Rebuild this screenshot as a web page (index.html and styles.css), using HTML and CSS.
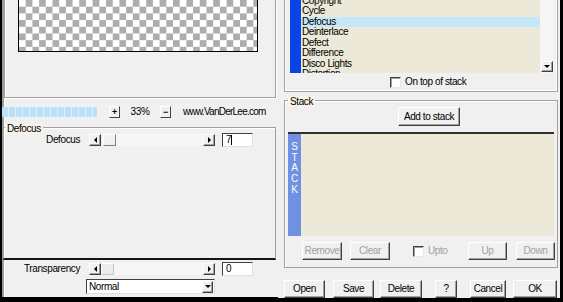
FILE: index.html
```html
<!DOCTYPE html>
<html lang="en">
<head>
  <meta charset="UTF-8" />
  <title>Filter Settings</title>
  <link rel="stylesheet" href="styles.css">
</head>
<body>
<div class="window">

  <!-- Left: preview and parameters -->
  <div class="left-panel">
    <div class="preview-box">
      <div class="preview"></div>
    </div>

    <div class="zoom-row">
      <div class="progress"></div>
      <div class="tiny-btn">+</div>
      <span class="zoom-value">33%</span>
      <div class="tiny-btn">&minus;</div>
      <span class="site">www.VanDerLee.com</span>
    </div>

    <div class="group settings-group">
      <div class="group-title">Defocus</div>
      <div class="param-row">
        <span class="param-label">Defocus</span>
        <div class="slider">
          <div class="arrow-btn"><span class="tri-left"></span></div>
          <div class="thumb"></div>
          <div class="track"></div>
          <div class="arrow-btn"><span class="tri-right"></span></div>
        </div>
        <div class="num-input">7<span class="caret"></span></div>
      </div>
    </div>

    <div class="param-row transparency-row">
      <span class="param-label">Transparency</span>
      <div class="slider">
        <div class="arrow-btn"><span class="tri-left"></span></div>
        <div class="thumb thumb-flat"></div>
        <div class="track"></div>
        <div class="arrow-btn"><span class="tri-right"></span></div>
      </div>
      <div class="num-input">0</div>
    </div>

    <div class="select">
      <span class="select-text">Normal</span>
      <div class="arrow-btn drop-btn"><span class="tri-down"></span></div>
    </div>
  </div>

  <!-- Right: filter list and stack -->
  <div class="right-panel">
    <div class="filter-box">
      <div class="filter-list">
        <div class="list-strip"></div>
        <div class="list-items">
          <div class="list-scroll">
            <div class="item">Copyright</div>
            <div class="item">Cycle</div>
            <div class="item selected">Defocus</div>
            <div class="item">Deinterlace</div>
            <div class="item">Defect</div>
            <div class="item">Difference</div>
            <div class="item">Disco Lights</div>
            <div class="item">Distortion</div>
          </div>
        </div>
        <div class="vscroll">
          <div class="arrow-btn down-btn"><span class="tri-down"></span></div>
        </div>
      </div>
      <div class="check-row on-top">
        <div class="checkbox"></div>
        <span>On top of stack</span>
      </div>
    </div>

    <div class="group stack-group">
      <div class="group-title">Stack</div>
      <div class="btn add-btn">Add to stack</div>
      <div class="stack-list">
        <div class="stack-strip">S<br>T<br>A<br>C<br>K</div>
        <div class="stack-items"></div>
      </div>
      <div class="stack-buttons">
        <div class="btn disabled btn-remove">Remove</div>
        <div class="btn disabled btn-clear">Clear</div>
        <div class="check-row upto">
          <div class="checkbox"></div>
          <span class="disabled-text">Upto</span>
        </div>
        <div class="btn disabled btn-up">Up</div>
        <div class="btn disabled btn-down">Down</div>
      </div>
    </div>

    <div class="dialog-buttons">
      <div class="btn btn-open">Open</div>
      <div class="btn btn-save">Save</div>
      <div class="btn btn-delete">Delete</div>
      <div class="btn btn-help">?</div>
      <div class="btn btn-cancel">Cancel</div>
      <div class="btn btn-ok">OK</div>
    </div>
  </div>

</div>
</body>
</html>
```

FILE: styles.css
```css
* {
  box-sizing: border-box;
  margin: 0;
  padding: 0;
}

body {
  background-color: #000;
  color: #000;
  font-family: 'Liberation Sans', Arial, sans-serif;
  font-size: 10px;
  letter-spacing: -0.4px;
  line-height: 1;
}

.window {
  width: 563px;
  height: 302px;
  display: flex;
  align-items: flex-start;
  padding: 0 3px 0 2px;
  background-color: #000;
  overflow: hidden;
}

/* Left panel */
.left-panel {
  width: 276px;
  height: 297px;
  background-color: #f0f0f0;
  box-shadow: inset 2px 0 #9a9a9a, inset 3px 0 #fff;
  display: flex;
  flex-direction: column;
}

.preview-box {
  margin-left: 2px;
  width: 272px;
  height: 98px;
  border: 1px solid #a0a0a0;
  border-top: none;
  box-shadow: inset 1px 0 #fff, 1px 1px #fff;
}

.preview {
  margin-left: 13px;
  width: 240px;
  height: 52px;
  border: 1px solid #000;
  border-top: none;
  background: conic-gradient(#adadad 25%, #fff 0 50%, #adadad 0 75%, #fff 0) 0 0 / 13.4px 13.4px;
}

.zoom-row {
  height: 26px;
  display: flex;
  align-items: center;
}

.progress {
  width: 95px;
  height: 10px;
  margin-top: 2px;
  background: repeating-linear-gradient(90deg, #b9e1f8 0 6px, #dcf1fc 6px 7px);
}

.tiny-btn {
  width: 11px;
  height: 12px;
  margin-left: 12px;
  margin-top: 2px;
  background-color: #f0f0f0;
  border: 1px solid;
  border-color: #fff #404040 #404040 #fff;
  display: flex;
  align-items: center;
  justify-content: center;
  font-size: 9px;
  font-weight: bold;
}

.zoom-value {
  width: 40px;
  margin-top: 2px;
  text-align: center;
}

.zoom-value + .tiny-btn {
  margin-left: 0;
}

.site {
  margin-left: 12px;
  margin-top: 2px;
  letter-spacing: -0.75px;
}

/* Group boxes */
.group {
  border: 1px solid #a0a0a0;
  box-shadow: inset 1px 1px #fff;
}

.group-title {
  width: fit-content;
  background-color: #f8f5e6;
  padding: 0 2px;
  height: 10px;
  line-height: 10px;
}

.settings-group {
  margin: 3px 0 0 1px;
  width: 273px;
  height: 133px;
  border-bottom: 2px solid #151515;
}

.settings-group .group-title {
  margin: -4px 0 0 1px;
}

.param-row {
  height: 14px;
  display: flex;
  align-items: center;
}

.settings-group .param-row {
  margin-top: -1px;
}

.param-label {
  width: 76px;
  text-align: right;
}

.transparency-row {
  margin-top: 2px;
}

.transparency-row .param-label {
  width: 78px;
}

.slider {
  margin-left: 9px;
  width: 126px;
  height: 12px;
  display: flex;
}

.arrow-btn {
  width: 12px;
  height: 12px;
  background-color: #f0f0f0;
  border: 1px solid;
  border-color: #fff #404040 #404040 #fff;
  box-shadow: inset -1px -1px #a0a0a0;
  display: flex;
  align-items: center;
  justify-content: center;
}

.thumb {
  width: 13px;
  margin-left: 2px;
  background-color: #f0f0f0;
  border: 1px solid;
  border-color: #fff #808080 #808080 #fff;
}

.thumb-flat {
  margin-left: 0;
  border-color: #fff #c8c8c8 #c8c8c8 #fff;
  background-color: #ececec;
}

.track {
  flex: 1;
  background-color: #f6f6f6;
}

.tri-left,
.tri-right,
.tri-down {
  width: 0;
  height: 0;
  border: 3px solid transparent;
}

.tri-left {
  border-left: none;
  border-right-color: #000;
}

.tri-right {
  border-right: none;
  border-left-color: #000;
}

.tri-down {
  border-bottom: none;
  border-top-color: #000;
}

.num-input {
  margin-left: 7px;
  width: 31px;
  height: 14px;
  background-color: #fff;
  border: 1px solid;
  border-color: #404040 #e0e0e0 #e0e0e0 #404040;
  padding-left: 3px;
  display: flex;
  align-items: center;
}

.caret {
  width: 1px;
  height: 10px;
  background-color: #000;
}

.select {
  margin: 3px 0 0 84px;
  width: 129px;
  height: 15px;
  background-color: #fff;
  border: 1px solid;
  border-color: #404040 #e0e0e0 #e0e0e0 #404040;
  display: flex;
  align-items: center;
}

.select-text {
  flex: 1;
  padding-left: 2px;
}

.drop-btn {
  width: 11px;
  height: 12px;
  margin-right: 1px;
}

/* Right panel */
.right-panel {
  width: 282px;
  height: 298px;
  background-color: #f0f0f0;
  display: flex;
  flex-direction: column;
}

.filter-box {
  margin-left: 6px;
  width: 274px;
  height: 92px;
  border: 1px solid #a0a0a0;
  border-top: none;
  box-shadow: inset 1px 0 #fff, inset -1px -1px #fff;
}

.filter-list {
  margin-left: 5px;
  width: 264px;
  height: 73px;
  display: flex;
}

.list-strip {
  width: 11px;
  background-color: #0a44e4;
}

.list-items {
  flex: 1;
  background-color: #ece9d8;
  overflow: hidden;
}

.list-scroll {
  margin-top: -4.5px;
}

.item {
  height: 10.5px;
  line-height: 10.5px;
  padding-left: 1px;
  white-space: nowrap;
}

.item.selected {
  background-color: #c6e7f9;
}

.vscroll {
  width: 14px;
  background-color: #f6f6f6;
  display: flex;
  flex-direction: column;
  justify-content: flex-end;
  padding: 0 1px 1px 1px;
}

.down-btn {
  width: 12px;
  height: 11px;
}

.check-row {
  display: flex;
  align-items: center;
}

.on-top {
  height: 18px;
  padding-left: 105px;
}

.checkbox {
  width: 11px;
  height: 11px;
  margin-right: 4px;
  background-color: #fff;
  border: 1px solid;
  border-color: #404040 #e8e8e8 #e8e8e8 #404040;
  box-shadow: inset 1px 1px #a0a0a0;
}

.stack-group {
  margin: 8px 0 0 6px;
  width: 274px;
  height: 168px;
}

.stack-group .group-title {
  margin: -5px 0 0 3px;
  height: 11px;
  line-height: 11px;
}

.btn {
  height: 18px;
  background-color: #f0f0f0;
  border: 1px solid;
  border-color: #fff #404040 #404040 #fff;
  box-shadow: inset -1px -1px #a0a0a0;
  display: flex;
  align-items: center;
  justify-content: center;
  white-space: nowrap;
}

.btn.disabled,
.disabled-text {
  color: #a0a0a0;
}

.add-btn {
  margin-left: 113px;
  width: 62px;
  height: 19px;
}

.stack-list {
  margin: 6px 0 0 3px;
  width: 266px;
  height: 104px;
  border-top: 2px solid #303030;
  display: flex;
}

.stack-strip {
  width: 13px;
  background-color: #7090e2;
  color: #fff;
  text-align: center;
  padding-top: 8px;
  line-height: 10.7px;
  letter-spacing: 0;
}

.stack-items {
  flex: 1;
  background-color: #ece9d8;
}

.stack-buttons {
  margin: 6px 0 0 17px;
  display: flex;
  align-items: center;
}

.btn-remove,
.btn-clear {
  width: 40px;
}

.btn-clear {
  margin-left: 8px;
}

.upto {
  margin-left: 23px;
  width: 55px;
}

.btn-up,
.btn-down {
  width: 39px;
}

.btn-down {
  margin-left: 9px;
}

.dialog-buttons {
  margin: 12px 0 0 6px;
  display: flex;
}

.btn-open { width: 41px; }
.btn-save { width: 41px; margin-left: 8px; }
.btn-delete { width: 42px; margin-left: 6px; }
.btn-help { width: 22px; margin-left: 13px; }
.btn-cancel { width: 36px; margin-left: 13px; }
.btn-ok { width: 44px; margin-left: 7px; }
```
